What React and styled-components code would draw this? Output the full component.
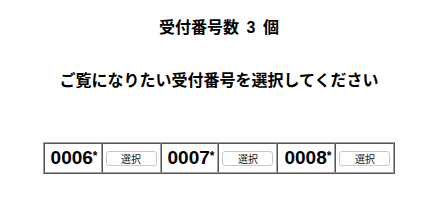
import React from "react";
import styled, { createGlobalStyle } from "styled-components";

const Global = createGlobalStyle`
  body {
    margin: 0;
    background: #fff;
    font-family: "Liberation Sans", Arial, "Noto Sans CJK JP", sans-serif;
    color: #000;
  }
`;

const Page = styled.div`
  width: 422px;
  box-sizing: border-box;
  padding: 18px 0 0 16px;
  display: flex;
  flex-direction: column;
  align-items: center;
`;

const Count = styled.h2`
  margin: 0;
  font-size: 16px;
  font-weight: bold;
  line-height: 20px;
  word-spacing: 3px;
`;

const Prompt = styled.h2`
  margin: 33px 0 0;
  font-size: 16px;
  font-weight: bold;
  line-height: 20px;
`;

const Table = styled.table`
  margin-top: 51px;
  border-spacing: 0;
  border: 1px solid;
  border-color: #a0a0a0 #555 #555 #a0a0a0;
`;

const Cell = styled.td`
  border: 1px solid;
  border-color: #555 #a0a0a0 #a0a0a0 #555;
  padding: ${(p) => (p.$num ? "3px 3px 3px 6px" : "1px 3px")};
  font-size: ${(p) => (p.$num ? "19px" : "11px")};
  font-weight: ${(p) => (p.$num ? "bold" : "normal")};
  height: 22px;
`;

const Star = styled.span`
  font-size: 12px;
  vertical-align: 4px;
`;

const Button = styled.button`
  width: 51px;
  height: 15px;
  padding: 0;
  font-family: "Noto Sans CJK JP", sans-serif;
  font-size: 10px;
  line-height: 13px;
  background: #fff;
  border: 1px solid #c8c8c8;
  border-radius: 3px;
  color: #111;
`;

const numbers = ["0006", "0007", "0008"];

export default function App() {
  return (
    <>
      <Global />
      <Page>
        <Count>受付番号数 3 個</Count>
        <Prompt>ご覧になりたい受付番号を選択してください</Prompt>
        <Table>
          <tbody>
            <tr>
              {numbers.map((n) => (
                <React.Fragment key={n}>
                  <Cell $num>
                    {n}
                    <Star>*</Star>
                  </Cell>
                  <Cell>
                    <Button>選択</Button>
                  </Cell>
                </React.Fragment>
              ))}
            </tr>
          </tbody>
        </Table>
      </Page>
    </>
  );
}
